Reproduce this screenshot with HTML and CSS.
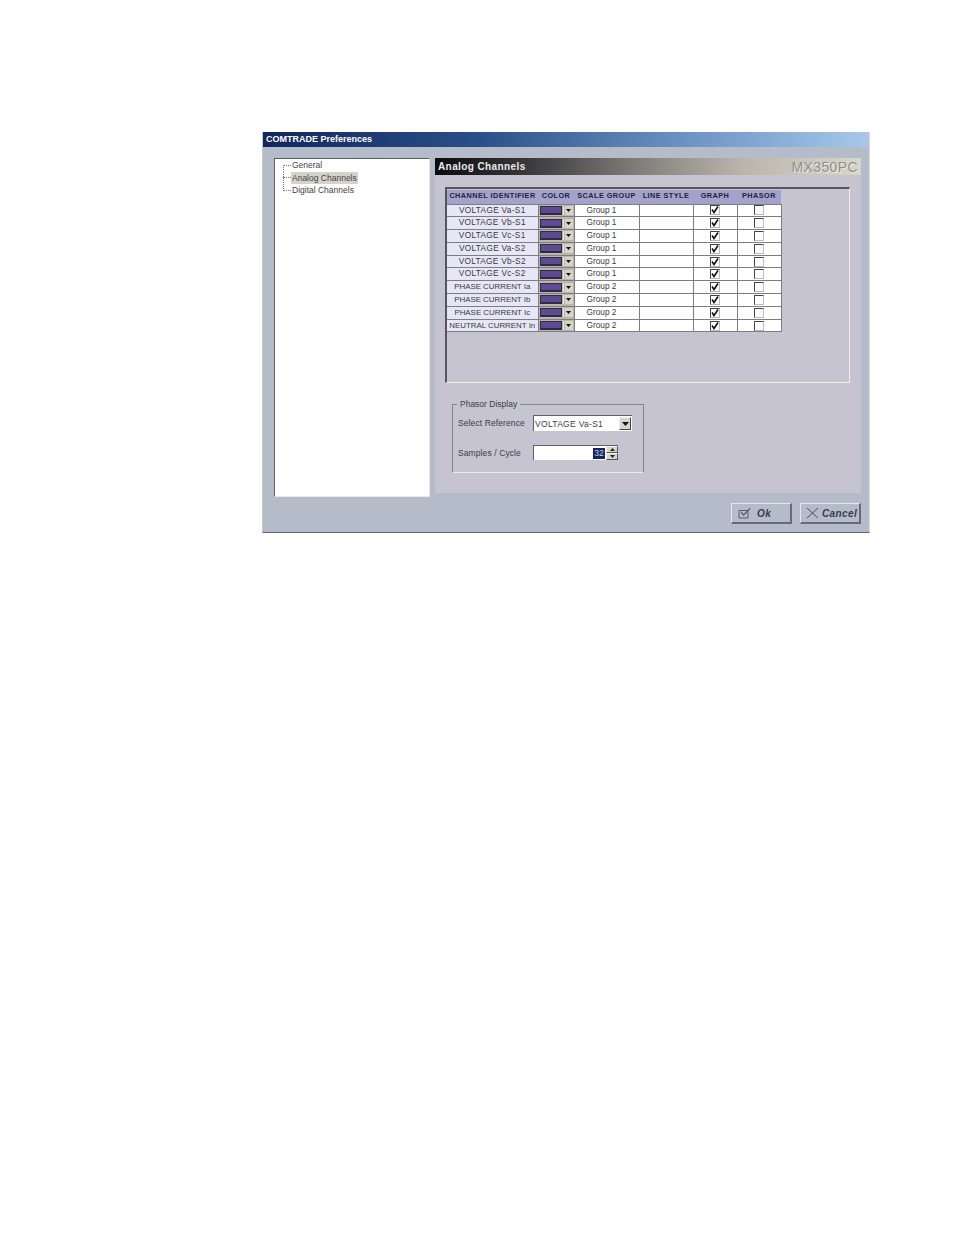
FILE: index.html
```html
<!DOCTYPE html>
<html lang="en">
<head>
<meta charset="utf-8">
<title>COMTRADE Preferences</title>
<link rel="stylesheet" href="styles.css">
</head>
<body>
<div class="dialog">
  <div class="titlebar">COMTRADE Preferences</div>
  <div class="main">
    <ul class="tree">
      <li><i class="dash"></i><span>General</span></li>
      <li><i class="dash"></i><span class="sel">Analog Channels</span></li>
      <li><i class="dash"></i><span>Digital Channels</span></li>
    </ul>
    <div class="panel">
      <div class="phead"><span class="ptitle">Analog Channels</span><span class="brand">MX350PC</span></div>
      <div class="frame">
        <table class="grid">
          <thead>
            <tr><th class="c1">CHANNEL IDENTIFIER</th><th class="c2">COLOR</th><th class="c3">SCALE GROUP</th><th class="c4">LINE STYLE</th><th class="c5">GRAPH</th><th class="c6">PHASOR</th></tr>
          </thead>
          <tbody id="rows"></tbody>
        </table>
      </div>
      <div class="phasor">
        <div class="legend">Phasor Display</div>
        <div class="frow r1">
          <label>Select Reference</label>
          <div class="select"><span>VOLTAGE Va-S1</span><i class="drop"><svg width="7" height="4" viewBox="0 0 7 4"><path d="M0 0h7L3.500 4z" fill="#111"/></svg></i></div>
        </div>
        <div class="frow r2">
          <label>Samples / Cycle</label>
          <div class="spin"><span class="val">32</span><i class="arrows"><b><svg width="5" height="3" viewBox="0 0 5 3"><path d="M0 3h5L2.500 0z" fill="#222"/></svg></b><b><svg width="5" height="3" viewBox="0 0 5 3"><path d="M0 0h5L2.500 3z" fill="#222"/></svg></b></i></div>
        </div>
      </div>
    </div>
  </div>
  <div class="buttons">
    <div class="btn ok"><svg width="13" height="11" viewBox="0 0 13 11"><path d="M1 2.500h9v7.500H1z" fill="none" stroke="#59606c"/><path d="M3 4l2.500 3L12 .5" fill="none" stroke="#59606c" stroke-width="1.200"/></svg><span>Ok</span></div>
    <div class="btn cancel"><svg width="13" height="12" viewBox="0 0 13 12"><path d="M1 1l11 10M12 1L1 11" fill="none" stroke="#4a515c" stroke-width="1"/></svg><span>Cancel</span></div>
  </div>
</div>
<script src="rows.js"></script>
</body>
</html>
```

FILE: rows.js
```js
var rows = [
  ["VOLTAGE Va-S1", "Group 1", "v"], ["VOLTAGE Vb-S1", "Group 1", "v"], ["VOLTAGE Vc-S1", "Group 1", "v"],
  ["VOLTAGE Va-S2", "Group 1", "v"], ["VOLTAGE Vb-S2", "Group 1", "v"], ["VOLTAGE Vc-S2", "Group 1", "v"],
  ["PHASE CURRENT Ia", "Group 2", "i"], ["PHASE CURRENT Ib", "Group 2", "i"], ["PHASE CURRENT Ic", "Group 2", "i"],
  ["NEUTRAL CURRENT In", "Group 2", "i"]
];
var arrow = '<svg width="5" height="3" viewBox="0 0 5 3"><path d="M0 0h5L2.500 3z" fill="#111"/></svg>';
var tick = '<svg width="8" height="8" viewBox="0 0 8 8"><path d="M1 3.500l2 3L7 .5" fill="none" stroke="#111" stroke-width="1.600"/></svg>';
document.getElementById("rows").innerHTML = rows.map(function (r) {
  return '<tr><td class="id ' + r[2] + '">' + r[0] + '</td>' +
    '<td class="col"><div class="swatch"><i class="fill"></i><i class="sep"></i><i class="arr">' + arrow + '</i></div></td>' +
    '<td class="grp">' + r[1] + '</td><td></td>' +
    '<td class="chk"><i class="box">' + tick + '</i></td>' +
    '<td class="chk"><i class="box"></i></td></tr>';
}).join("");
```

FILE: styles.css
```css
html, body { margin: 0; padding: 0; background: #fff; }
body { width: 954px; height: 1235px; overflow: hidden; font-family: "Liberation Sans", Arial, sans-serif; color: #333; }

.dialog {
  box-sizing: border-box;
  width: 608px;
  height: 401px;
  margin: 132px 0 0 262px;
  background: #b4bcc9;
  border-bottom: 1px solid #5f646c;
  border-left: 1px solid #c4c8cf;
  border-right: 1px solid #d8dbe0;
  display: flex;
  flex-direction: column;
}
.titlebar {
  height: 15px;
  line-height: 15px;
  padding-left: 3px;
  font-size: 9px;
  font-weight: bold;
  color: #fff;
  background: linear-gradient(90deg, #12265f 0%, #2a4f88 35%, #6d93c4 70%, #a7c8ea 100%);
}
.main { display: flex; padding: 11px 8px 0 11px; gap: 5px; }

.tree {
  box-sizing: border-box;
  width: 156px;
  height: 339px;
  margin: 0;
  padding: 0 0 0 8px;
  list-style: none;
  background: #fff;
  border: 1px solid #5b5f66;
  border-right-color: #e6e8ec;
  border-bottom-color: #e6e8ec;
  font-size: 8.500px;
  color: #444;
}
.tree li {
  display: flex;
  align-items: center;
  height: 12.600px;
  background-image: repeating-linear-gradient(180deg, #777 0 1px, transparent 1px 2px);
  background-size: 1px 100%;
  background-repeat: no-repeat;
}
.tree li:first-child { background-size: 1px 50%; background-position: 0 100%; }
.tree li:last-child { background-size: 1px 50%; background-position: 0 0; }
.dash { flex: none; width: 8px; border-top: 1px dotted #777; }
.tree li span { padding: 0 1px; }
.tree li .sel { background: #d5d3cb; padding: 1px 1px; }

.panel {
  width: 426px;
  height: 335px;
  background: #c6c4d0;
  display: flex;
  flex-direction: column;
}
.phead {
  height: 17px;
  display: flex;
  justify-content: space-between;
  align-items: center;
  padding: 0 3px 0 3px;
  background: linear-gradient(90deg, #0c0c0c 0%, #3a3a3c 22%, #827f7b 48%, #b9b5ab 72%, #d8d5c9 100%);
}
.ptitle { font-size: 10px; font-weight: bold; letter-spacing: 0.400px; color: #e9e9e9; }
.brand { font-size: 14px; letter-spacing: 0.400px; color: #8f8f8d; text-shadow: 1px 1px 0 #ecebe4; }

.frame {
  box-sizing: border-box;
  width: 405px;
  height: 196px;
  margin: 12px 0 0 10px;
  padding: 1px 0 0 0;
  border: 1px solid #f0f0f2;
  border-top: 2px solid #55565c;
  border-left: 2px solid #55565c;
}
.grid {
  border-collapse: collapse;
  table-layout: fixed;
  width: 334px;
  font-size: 8.300px;
  color: #3a3a3a;
}
.grid th {
  height: 14px;
  padding: 0 0 2px;
  box-sizing: border-box;
  background: #a3a2cb;
  font-size: 7.300px;
  letter-spacing: 0.450px;
  color: #23233a;
  white-space: nowrap;
  text-align: center;
}
.c1 { width: 91px; }
.c2 { width: 36px; }
.c3 { width: 65px; }
.c4 { width: 54px; }
.c5 { width: 44px; }
.c6 { width: 44px; }
.grid td {
  height: 11.800px;
  padding: 0;
  background: #fff;
  border: 1px solid #7e7e82;
  border-left-color: #6d6d70;
  text-align: center;
  white-space: nowrap;
  line-height: 11px;
}
.grid tr td:first-child { border-left: 0; }
.grid td.id { background: #e7e6f7; vertical-align: top; }
.grid td.v { letter-spacing: 0.300px; }
.grid td.i { font-size: 7.900px; }
.grid td.col { background: #b9b6ab; }
.swatch { display: flex; align-items: center; height: 11px; padding: 0 1px 0 1px; gap: 1px; }
.fill { width: 22px; height: 6px; background: #5d4a91; border: 1px solid #2f2a45; border-bottom-width: 2px; }
.sep { width: 1px; height: 9px; background: #eceae2; }
.arr { display: flex; align-items: center; justify-content: center; width: 8px; height: 9px; background: #d6d3c9; }
.grid td.grp { padding-right: 10px; vertical-align: top; }
.grid td.chk { line-height: 0; }
.box {
  box-sizing: border-box;
  display: inline-flex;
  align-items: center;
  justify-content: center;
  width: 10px;
  height: 10px;
  background: #fff;
  border: 1px solid #444;
  border-right-color: #bbb;
  border-bottom-color: #bbb;
}

.phasor {
  box-sizing: border-box;
  position: relative;
  width: 192px;
  height: 69px;
  margin: 21px 0 0 17px;
  border: 1px solid #85858c;
  border-bottom-color: #ecebef;
  font-size: 8.500px;
  color: #3d3d42;
}
.legend {
  position: absolute;
  top: -6px;
  left: 4px;
  padding: 0 3px;
  background: #c6c4d0;
  line-height: 11px;
}
.frow { display: flex; align-items: center; padding-left: 5px; }
.frow label { width: 75px; letter-spacing: 0.100px; }
.r1 { margin-top: 10px; }
.r2 { margin-top: 14px; }
.select, .spin {
  box-sizing: border-box;
  display: flex;
  align-items: center;
  background: #fff;
  border-top: 1px solid #5f5f64;
  border-left: 1px solid #5f5f64;
}
.select { width: 99px; height: 16px; justify-content: space-between; padding: 0 1px 0 1px; letter-spacing: 0.300px; }
.drop {
  display: flex;
  align-items: center;
  justify-content: center;
  width: 12px;
  height: 13px;
  background: #d8d5ca;
  border: 1px solid #f2f1ea;
  border-right-color: #444;
  border-bottom-color: #444;
  box-sizing: border-box;
}
.spin { width: 85px; height: 15px; justify-content: flex-end; }
.val { width: 12px; height: 11px; line-height: 11px; background: #14265f; color: #c9d2ea; font-size: 8.500px; text-align: center; margin-right: 1px; }
.arrows { display: flex; flex-direction: column; width: 12px; height: 14px; }
.arrows b {
  box-sizing: border-box;
  flex: 1;
  display: flex;
  align-items: center;
  justify-content: center;
  background: #d8d5ca;
  border: 1px solid #f2f1ea;
  border-right-color: #555;
  border-bottom-color: #555;
}

.buttons { display: flex; justify-content: flex-end; gap: 8px; padding: 6px 8px 0 0; }
.btn {
  box-sizing: border-box;
  width: 61px;
  height: 21px;
  display: flex;
  align-items: center;
  background: #b4bcc9;
  border: 1px solid #e4e7ec;
  border-right: 2px solid #666b75;
  border-bottom: 2px solid #666b75;
  font-size: 10px;
  font-weight: bold;
  font-style: italic;
  letter-spacing: 0.400px;
  color: #363c4c;
}
.ok { padding-left: 6px; gap: 6px; }
.cancel { padding-left: 5px; gap: 3px; }
```
